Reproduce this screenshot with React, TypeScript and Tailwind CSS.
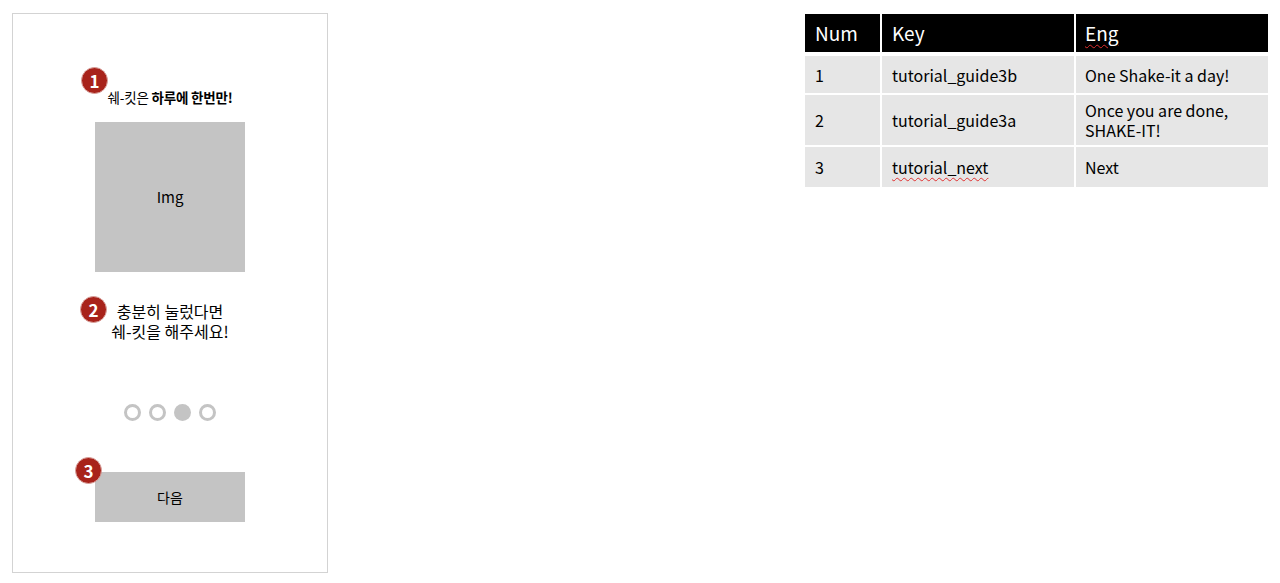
import React from "react";

const font = { fontFamily: '"Noto Sans CJK KR", "Noto Sans", sans-serif' };

function Badge({ n, className }: { n: number; className: string }) {
  return (
    <div
      className={`absolute w-[27px] h-[27px] rounded-full bg-[#a8231b] border border-[#d9a39e] flex items-center justify-center text-white font-bold text-[17px] leading-none ${className}`}
    >
      {n}
    </div>
  );
}

function Dot({ filled }: { filled?: boolean }) {
  return filled ? (
    <div className="w-[17px] h-[17px] rounded-full bg-[#c4c4c4]" />
  ) : (
    <div className="w-[17px] h-[17px] rounded-full border-[3px] border-[#c4c4c4]" />
  );
}

export default function App() {
  return (
    <div className="w-[1280px] h-[583px] bg-white flex items-start text-black" style={font}>
      {/* phone frame */}
      <div className="relative ml-[12px] mt-[13px] w-[316px] h-[560px] border border-[#d3d3d3] flex flex-col items-center">
        <Badge n={1} className="left-[68px] top-[53px]" />
        <Badge n={2} className="left-[67px] top-[282px]" />
        <Badge n={3} className="left-[62px] top-[443px]" />

        <div className="mt-[74px] h-[18px] text-[13.5px] leading-[18px] tracking-[-0.2px]">
          쉐-킷은 <span className="font-bold">하루에 한번만!</span>
        </div>

        <div className="mt-[16px] w-[150px] h-[150px] bg-[#c4c4c4] flex items-center justify-center text-[15px]">
          Img
        </div>

        <div className="mt-[29px] text-[16px] leading-[20px] text-center">
          충분히 눌렀다면
          <br />
          쉐-킷을 해주세요!
        </div>

        <div className="mt-[63px] flex gap-[8px]">
          <Dot />
          <Dot />
          <Dot filled />
          <Dot />
        </div>

        <div className="mt-[51px] w-[150px] h-[50px] bg-[#c4c4c4] flex items-center justify-center text-[14px]">
          다음
        </div>
      </div>

      {/* table */}
      <div className="ml-auto mr-[12px] mt-[14px] w-[463px] flex flex-col">
        <div className="grid grid-cols-[75px_192px_192px] gap-x-[2px] h-[38px] text-white text-[19px]">
          <div className="bg-black flex items-center pl-[10px]">Num</div>
          <div className="bg-black flex items-center pl-[10px]">Key</div>
          <div className="bg-black flex items-center pl-[9px]">
            <span className="underline decoration-wavy decoration-[#e03030] decoration-1 underline-offset-[3px]">Eng</span>
          </div>
        </div>
        <div className="mt-[4px] flex flex-col gap-y-[2px] text-[16px]">
          <div className="grid grid-cols-[75px_192px_192px] gap-x-[2px] h-[37px]">
            <div className="bg-[#e6e6e6] flex items-center pl-[10px]">1</div>
            <div className="bg-[#e6e6e6] flex items-center pl-[10px]">tutorial_guide3b</div>
            <div className="bg-[#e6e6e6] flex items-center pl-[9px]">One Shake-it a day!</div>
          </div>
          <div className="grid grid-cols-[75px_192px_192px] gap-x-[2px] h-[50px]">
            <div className="bg-[#e6e6e6] flex items-center pl-[10px]">2</div>
            <div className="bg-[#e6e6e6] flex items-center pl-[10px]">tutorial_guide3a</div>
            <div className="bg-[#e6e6e6] flex flex-col justify-center pl-[9px] leading-[20px]">
              <span>Once you are done,</span>
              <span>SHAKE-IT!</span>
            </div>
          </div>
          <div className="grid grid-cols-[75px_192px_192px] gap-x-[2px] h-[40px]">
            <div className="bg-[#e6e6e6] flex items-center pl-[10px]">3</div>
            <div className="bg-[#e6e6e6] flex items-center pl-[10px]">
              <span className="underline decoration-wavy decoration-[#e03030] decoration-1 underline-offset-[3px]">tutorial_next</span>
            </div>
            <div className="bg-[#e6e6e6] flex items-center pl-[9px]">Next</div>
          </div>
        </div>
      </div>
    </div>
  );
}
